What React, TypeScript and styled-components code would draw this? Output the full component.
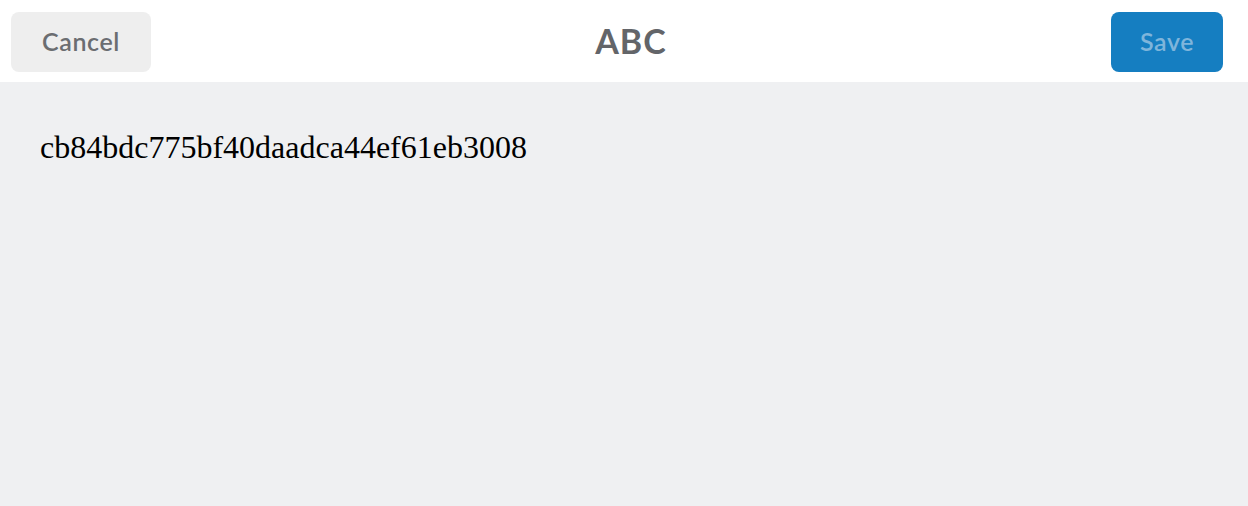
import React from "react";
import { styled, createGlobalStyle } from "styled-components";

const GlobalStyle = createGlobalStyle`
  html, body {
    margin: 0;
    padding: 0;
    background: #eff0f2;
  }
  #root {
    min-height: 100vh;
    display: flex;
    flex-direction: column;
  }
`;

const App = () => {
  return (
    <>
      <GlobalStyle />
      <Page>
        <TopBar>
          <BarButton>Cancel</BarButton>
          <Title>ABC</Title>
          <BarButton primary disabled>
            Save
          </BarButton>
        </TopBar>
        <Body>
          <IdText>cb84bdc775bf40daadca44ef61eb3008</IdText>
        </Body>
      </Page>
    </>
  );
};

const Page = styled.div`
  flex: 1;
  display: flex;
  flex-direction: column;
  background: #eff0f2;
`;

const TopBar = styled.header`
  height: 82px;
  box-sizing: border-box;
  padding: 12px 25px 10px 11px;
  display: flex;
  align-items: flex-start;
  justify-content: space-between;
  background: #ffffff;
`;

const BarButton = styled.button<{ primary?: boolean }>`
  height: 60px;
  padding: 0 0 2px;
  width: ${(p) => (p.primary ? "112px" : "140px")};
  border: none;
  border-radius: 8px;
  background: ${(p) => (p.primary ? "#157ec1" : "#eeeeee")};
  color: ${(p) => (p.primary ? "#7fb5db" : "#6b6d71")};
  font-family: "Lato", "Open Sans", sans-serif;
  font-size: 25px;
  font-weight: 600;
  letter-spacing: 0.6px;
  cursor: pointer;
  &:disabled {
    cursor: default;
  }
`;

const Title = styled.h1`
  margin: 0;
  line-height: 58px;
  font-family: "Lato", "Open Sans", sans-serif;
  font-size: 34px;
  font-weight: 700;
  color: #636569;
  letter-spacing: 1px;
`;

const Body = styled.main`
  flex: 1;
  padding: 47px 40px;
`;

const IdText = styled.div`
  font-family: "Liberation Serif", "Times New Roman", serif;
  font-size: 32px;
  color: #000000;
`;

export default App;
